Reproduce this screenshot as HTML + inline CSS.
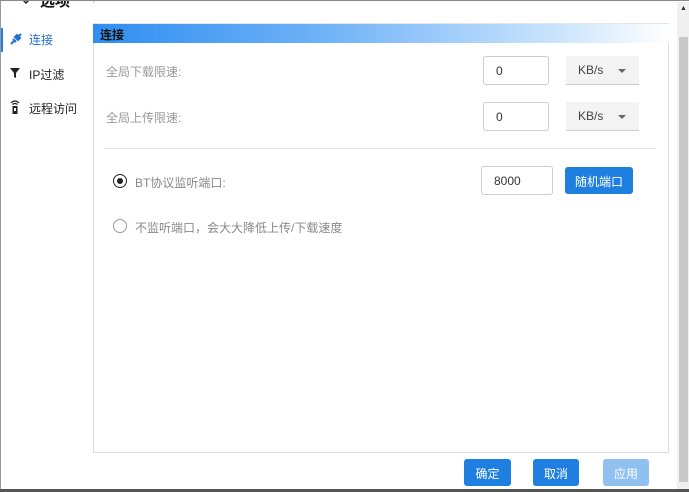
<!DOCTYPE html>
<html><head><meta charset="utf-8"><style>
*{box-sizing:border-box;margin:0;padding:0}
body{width:689px;height:492px;position:relative;background:#fff;font-family:"Liberation Sans","Noto Sans CJK SC",sans-serif;overflow:hidden;color:#333}
.abs{position:absolute}
.bot{left:0;top:489px;width:689px;height:3px;background:#555}
.sb{left:677px;top:2px;width:12px;height:487px;background:#f0f0f0}
.thumb{left:679px;top:37px;width:9px;height:445px;background:#c8c8c8}
.nav{font-size:12px;color:#222}
.panel{left:93px;top:24px;width:576px;height:429px;border:1px solid #ddd;border-top:none}
.hdr{left:93px;top:23px;width:576px;height:20px;border-top:1px solid #e4e4e4;background:linear-gradient(90deg,#2e8ef0 0%,#6fb2f7 40%,#c9e3fc 80%,#fff 100%);font-size:12px;font-weight:bold;color:#111;padding:2px 0 0 7px}
.lbl{font-size:12px;color:#999}
.inp{width:66px;height:29px;border:1px solid #ccc;border-radius:3px;font-size:12px;padding:7px 0 0 12px;color:#333}
.sel{width:73px;height:29px;background:#f3f3f3;border-bottom:1px solid #ccc;font-size:12px;color:#444;padding:7px 0 0 12px}
.sel:after{content:"";position:absolute;left:52px;top:13px;border:4px solid transparent;border-top:4px solid #666}
.btn{height:27px;border-radius:3px;background:#1f7fe0;color:#fff;font-size:12px;text-align:center;padding-top:6px}
.radio{width:14px;height:14px;border-radius:50%;border:1.5px solid #999}
</style></head><body>
<div class="abs" style="left:0;top:0;width:1px;height:492px;background:#999"></div>
<div class="abs" style="left:40px;top:-10px;font-size:15px;font-weight:bold;color:#111">选项</div>
<svg class="abs" style="left:18px;top:-4px" width="16" height="9" viewBox="0 0 16 9"><path d="M1 0 L8 7 L15 0" stroke="#222" stroke-width="1.5" fill="none"/></svg>
<div class="abs" style="left:84px;top:-9px;font-size:11px;color:#999">Options</div>
<div class="abs" style="left:0;top:0;width:689px;height:1px;background:#888"></div>
<div class="abs" style="left:1px;top:28px;width:2px;height:24px;background:#1f7fe0"></div>
<svg class="abs" style="left:9px;top:32px" width="14" height="14" viewBox="0 0 14 14"><path d="M2 12 L5 9 M4 7 L7 10 M6 5 L9 8 L11 6 L8 3 Z M10 4 L12 2" stroke="#1f6fd0" stroke-width="2" fill="#1f6fd0"/></svg>
<div class="abs nav" style="left:29px;top:31px;color:#1f6fd0">连接</div>
<svg class="abs" style="left:9px;top:67px" width="12" height="12" viewBox="0 0 12 12"><path d="M1 1 H11 L7 6 V11 L5 10 V6 Z" fill="#222"/></svg>
<div class="abs nav" style="left:29px;top:66px">IP过滤</div>
<svg class="abs" style="left:10px;top:100px" width="10" height="15" viewBox="0 0 10 15"><path d="M1 3 Q5 -1 9 3 M2.5 4.5 Q5 2.5 7.5 4.5" stroke="#222" fill="none" stroke-width="1.2"/><rect x="2.5" y="6" width="5" height="8" fill="#222"/><rect x="4" y="8" width="2" height="3" fill="#fff"/></svg>
<div class="abs nav" style="left:29px;top:100px">远程访问</div>
<div class="abs panel"></div>
<div class="abs hdr">连接</div>
<div class="abs lbl" style="left:106px;top:63px">全局下载限速:</div>
<div class="abs inp" style="left:483px;top:56px">0</div>
<div class="abs sel" style="left:566px;top:56px">KB/s</div>
<div class="abs lbl" style="left:106px;top:109px">全局上传限速:</div>
<div class="abs inp" style="left:483px;top:102px">0</div>
<div class="abs sel" style="left:566px;top:102px">KB/s</div>
<div class="abs" style="left:104px;top:148px;width:552px;height:1px;background:#e6e6e6"></div>
<div class="abs radio" style="left:113px;top:174px;border-color:#222"></div>
<div class="abs" style="left:117px;top:178px;width:6px;height:6px;border-radius:50%;background:#222"></div>
<div class="abs lbl" style="left:135px;top:174px;color:#888">BT协议监听端口:</div>
<div class="abs inp" style="left:481px;top:166px;width:72px;height:29px">8000</div>
<div class="abs btn" style="left:565px;top:167px;width:68px">随机端口</div>
<div class="abs radio" style="left:113px;top:219px"></div>
<div class="abs lbl" style="left:135px;top:219px;color:#888">不监听端口，会大大降低上传/下载速度</div>
<div class="abs btn" style="left:464px;top:459px;width:47px">确定</div>
<div class="abs btn" style="left:533px;top:459px;width:46px">取消</div>
<div class="abs btn" style="left:603px;top:459px;width:46px;background:#8fc0f0">应用</div>
<div class="abs sb"></div>
<div class="abs" style="left:680px;top:5px;font-size:7px;color:#333">▲</div>
<div class="abs thumb"></div>
<div class="abs bot"></div>
</body></html>
